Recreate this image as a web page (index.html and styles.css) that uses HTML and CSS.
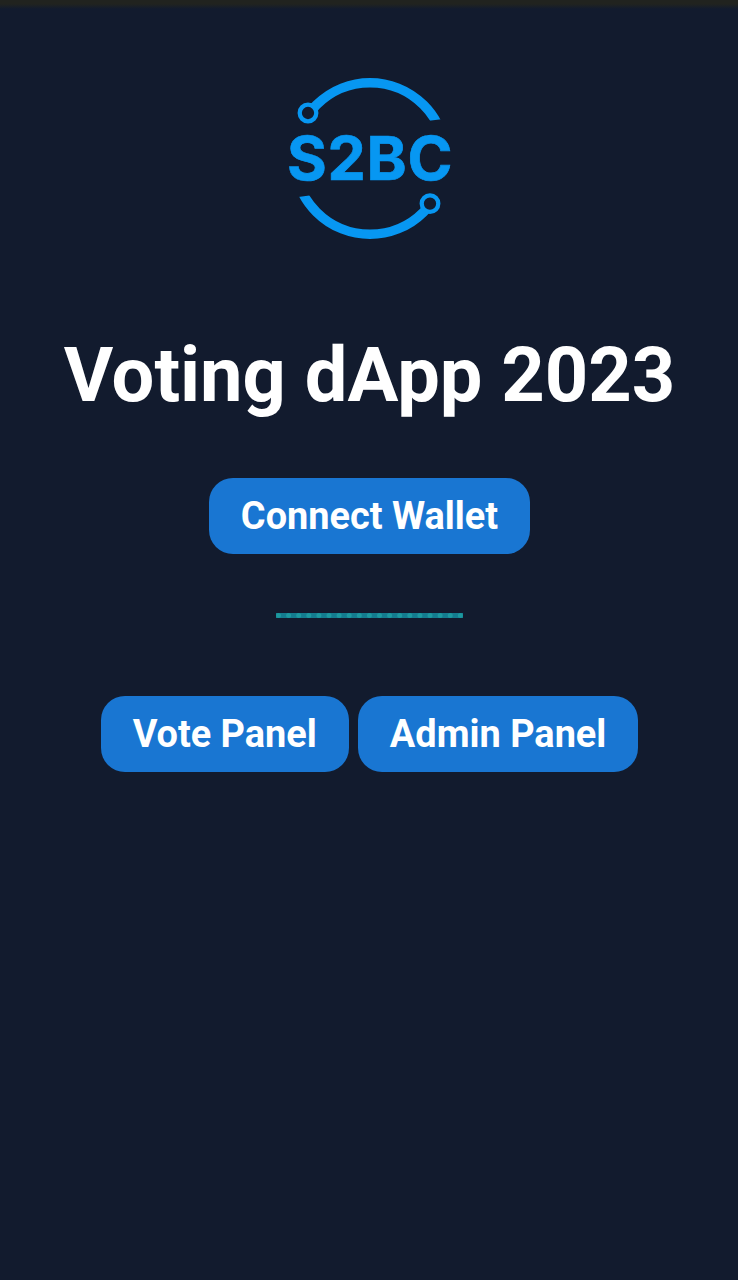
FILE: index.html
```
<!DOCTYPE html>
<html lang="en">
<head>
<meta charset="utf-8">
<title>Voting dApp 2023</title>
<link rel="stylesheet" href="styles.css">
</head>
<body>
<main class="page">
  <svg class="logo" viewBox="0 0 180 180" role="img" aria-label="S2BC">
    <defs>
      <clipPath id="top"><path d="M0 0H180V47L147 51L28 51V43L0 20Z"/></clipPath>
      <clipPath id="bottom"><path d="M0 129.5L33 125H150V134L180 155V180H0Z"/></clipPath>
    </defs>
    <circle class="arc" cx="90" cy="88.5" r="75.7" clip-path="url(#top)"/>
    <circle class="arc" cx="90" cy="88.5" r="75.7" clip-path="url(#bottom)"/>
    <circle class="node" cx="28" cy="43" r="8.3"/>
    <circle class="node" cx="150" cy="133.6" r="8.3"/>
    <text class="name" x="7" y="110.3" textLength="165.5">S2BC</text>
  </svg>
  <h1 class="title">Voting dApp 2023</h1>
  <button class="button">Connect Wallet</button>
  <hr class="divider">
  <div class="panels">
    <button class="button">Vote Panel</button>
    <button class="button">Admin Panel</button>
  </div>
</main>
</body>
</html>
```
FILE: styles.css
```
* { box-sizing: border-box; }
body {
  margin: 0;
  min-height: 1280px;
  background: linear-gradient(#21231f 0, #21231f 4px, #121b2e 9px);
  font-family: Roboto, sans-serif;
}
.page {
  display: flex;
  flex-direction: column;
  align-items: center;
  padding: 70px 0 0 1px;
}
.logo { display: block; width: 180px; height: 180px; margin-left: 1px; }
.arc { fill: none; stroke: #0797f2; stroke-width: 9.6; }
.node { fill: #121b2e; stroke: #0797f2; stroke-width: 4.3; }
.name {
  fill: #0797f2;
  stroke: #0797f2;
  stroke-width: 0.7;
  font: 700 60.8px Inter, sans-serif;
}
.title {
  margin: 80px 0 57px;
  color: #fff;
  font-size: 75.8px;
  font-weight: 700;
  line-height: 91px;
  white-space: nowrap;
}
.button {
  height: 76px;
  padding: 0 32px;
  border: 0;
  border-radius: 24px;
  background: #1976d2;
  color: #fff;
  font: 700 37.9px/76px Roboto, sans-serif;
  white-space: nowrap;
}
.divider {
  width: 187px;
  height: 5px;
  margin: 59px 0 78px;
  border: 0;
  border-top: 5px dotted #1c989e;
  background: #147c8f;
}
.panels { display: flex; gap: 9px; }
```
